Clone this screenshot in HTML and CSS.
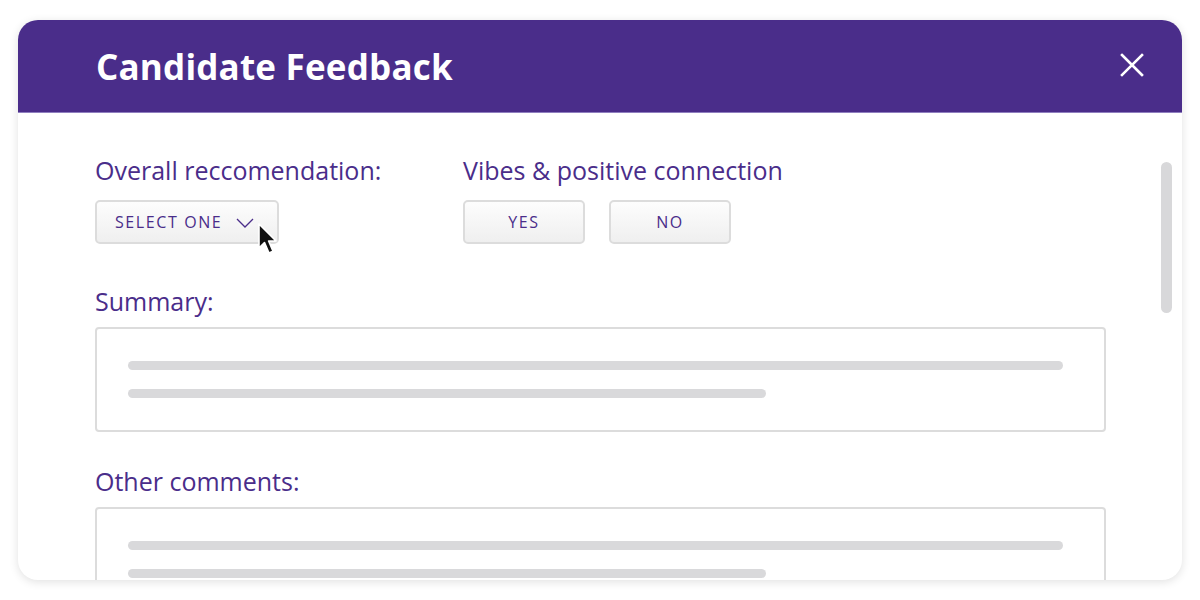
FILE: index.html
```html
<!DOCTYPE html>
<html lang="en">
<head>
    <meta charset="UTF-8">
    <meta name="viewport" content="width=device-width, initial-scale=1.0">
    <title>Candidate Feedback</title>
    <link rel="stylesheet" href="styles.css">
</head>
<body>
    <div class="modal">
        <div class="modal-header">
            <h1 class="modal-title">Candidate Feedback</h1>
            <button class="close-btn" aria-label="Close">
                <svg width="24" height="24" viewBox="0 0 24 24">
                    <path d="M2 2 L22 22 M22 2 L2 22" stroke="#ffffff" stroke-width="2.6" stroke-linecap="square" fill="none"/>
                </svg>
            </button>
        </div>

        <div class="modal-body">
            <div class="field-row">
                <div class="field">
                    <div class="field-label">Overall reccomendation:</div>
                    <div class="select-wrap">
                        <button class="btn select-btn">
                            SELECT ONE
                            <svg class="chevron" width="18" height="10" viewBox="0 0 18 10">
                                <path d="M1 1 L9 9 L17 1" stroke="#4a2d8a" stroke-width="1.3" fill="none"/>
                            </svg>
                        </button>
                        <svg class="cursor" width="22" height="34" viewBox="0 0 22 34">
                            <path d="M2 2 L2 26 L7.5 20.5 L12 31 L16 29.2 L11.6 19 L19 19 Z" fill="#111" stroke="#fff" stroke-width="1.6" stroke-linejoin="round"/>
                        </svg>
                    </div>
                </div>
                <div class="field">
                    <div class="field-label">Vibes &amp; positive connection</div>
                    <div class="choice-group">
                        <button class="btn choice-btn">YES</button>
                        <button class="btn choice-btn">NO</button>
                    </div>
                </div>
            </div>

            <div class="field-label">Summary:</div>
            <div class="text-box">
                <div class="text-line"></div>
                <div class="text-line short"></div>
            </div>

            <div class="field-label">Other comments:</div>
            <div class="text-box">
                <div class="text-line"></div>
                <div class="text-line short"></div>
            </div>
        </div>

        <div class="scrollbar"></div>
    </div>
</body>
</html>
```

FILE: styles.css
```css
:root {
    --brand-purple: #4a2d8a;
    --line-grey: #d9d9db;
    --border-grey: #dcdcdc;
}
body {
    margin: 0;
    background: #fff;
    font-family: 'Open Sans', 'Noto Sans', sans-serif;
}
.modal {
    position: relative;
    margin: 20px 18px;
    height: 560px;
    background: #fff;
    border-radius: 20px;
    overflow: hidden;
    box-shadow: 0 2px 10px rgba(0,0,0,0.12);
}
.modal-header {
    height: 93px;
    background: var(--brand-purple);
    border-bottom: 1px solid #8f7fbf;
    box-sizing: border-box;
    display: flex;
    align-items: center;
    justify-content: space-between;
    padding: 0 38px 0 78px;
}
.modal-title {
    margin: 0;
    color: #fff;
    font-size: 35px;
    font-weight: 700;
    letter-spacing: 0.2px;
}
.close-btn {
    background: none;
    border: none;
    padding: 0;
    cursor: pointer;
    display: flex;
    margin-bottom: 2px;
}
.modal-body {
    padding: 41px 76px 0 77px;
}
.field-row {
    display: flex;
    margin-bottom: 41px;
}
.field {
    width: 368px;
}
.field-label {
    color: var(--brand-purple);
    font-size: 25px;
    line-height: 32px;
    margin-bottom: 14px;
}
.btn {
    height: 44px;
    box-sizing: border-box;
    background: linear-gradient(#fdfdfd, #efefef);
    border: 2px solid var(--border-grey);
    border-radius: 5px;
    color: var(--brand-purple);
    font-family: inherit;
    font-size: 16px;
    font-weight: 500;
    letter-spacing: 1.6px;
    cursor: pointer;
}
.select-wrap {
    position: relative;
    display: inline-block;
}
.select-btn {
    width: 184px;
    display: flex;
    align-items: center;
    gap: 14px;
    padding: 0 18px;
}
.chevron {
    margin-top: 1px;
}
.cursor {
    position: absolute;
    left: 162px;
    top: 22px;
}
.choice-group {
    display: flex;
    gap: 24px;
}
.choice-btn {
    width: 122px;
}
.text-box {
    border: 2px solid var(--border-grey);
    border-radius: 4px;
    height: 105px;
    box-sizing: border-box;
    padding: 32px 41px 0 31px;
    margin-bottom: 33px;
}
.field-label + .text-box {
    margin-top: -4px;
}
.text-line {
    height: 9px;
    border-radius: 5px;
    background: var(--line-grey);
    margin-bottom: 19px;
}
.text-line.short {
    width: 638px;
}
.scrollbar {
    position: absolute;
    right: 10px;
    top: 142px;
    width: 11px;
    height: 151px;
    border-radius: 6px;
    background: #d8d8da;
}
```
